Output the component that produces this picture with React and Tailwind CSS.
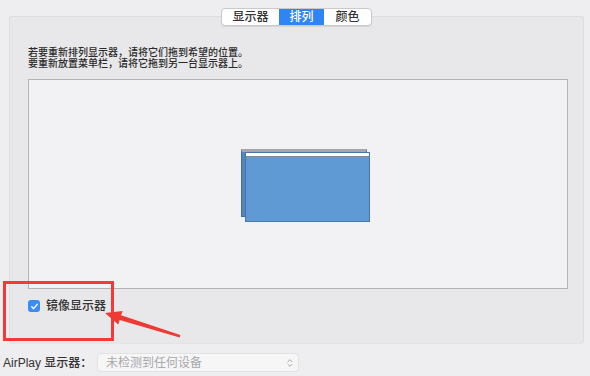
import { ChevronsUpDown } from "lucide-react";

const tabs = [
  { label: "显示器", w: "w-[57px]" },
  { label: "排列", w: "w-[45px]", active: true },
  { label: "颜色", w: "w-[47px]" },
];

// red annotation arrow, points from lower right to the checkbox label
const Arrow = () => (
  <svg className="absolute left-0 top-0" width="590" height="376" viewBox="0 0 590 376">
    <polygon
      points="105,313 122.5,311 121.1,315.3 180.3,335 179.7,337.5 119.7,320.1 118.3,324.4"
      fill="#ee3a32"
    />
  </svg>
);

export default function App() {
  return (
    <div className="relative w-[590px] h-[376px] overflow-hidden bg-[#eeedef] font-['Liberation_Sans','Noto_Sans_CJK_SC',sans-serif] text-[#2e2e2e]">
      {/* group box */}
      <div className="ml-[9px] mr-[6px] mt-[16px] h-[328px] border border-[#dedde0] border-b-[#e4e3e5] rounded-[3px] bg-[#e8e7e9]">
        {/* segmented control */}
        <div className="flex justify-center -mt-[9px]">
          <div className="flex h-[18px] rounded-[4px] border border-[#c9c9cb] bg-white shadow-[0_1px_1px_rgba(0,0,0,0.08)] overflow-hidden">
            {tabs.map((t, i) => (
              <div
                key={t.label}
                className={`${t.w} flex items-center justify-center text-[12px] leading-none font-medium ${
                  t.active ? "bg-[#2f84f6] text-white" : "text-[#333]"
                } ${i > 0 && !t.active && !tabs[i - 1].active ? "border-l border-[#d0d0d0]" : ""}`}
              >
                {t.label}
              </div>
            ))}
          </div>
        </div>

        {/* hint text */}
        <div className="pl-[18px] mt-[21px] text-[10px] leading-[11px] font-medium text-[#2a2a2a]">
          <p>若要重新排列显示器，请将它们拖到希望的位置。</p>
          <p>要重新放置菜单栏，请将它拖到另一台显示器上。</p>
        </div>

        {/* arrangement area */}
        <div className="ml-[18px] mt-[10px] w-[540px] h-[210px] border border-[#b4b4b6] bg-[#f2f1f3] flex items-center justify-center">
          <div className="relative ml-[15px] mt-[3px] w-[129px] h-[73px]">
            <div className="absolute left-0 top-0 w-[126px] h-[68px] bg-[#4f86c0] border border-[#476f9a] border-t-[3px] border-t-[#a7a6aa]" />
            <div className="absolute left-[4px] top-[3px] w-[125px] h-[70px] bg-[#5f9ad5] border border-[#4a76a5]">
              <div className="h-[4px] bg-white border-b border-[#8a8a8e]" />
            </div>
          </div>
        </div>

        {/* mirror checkbox */}
        <div className="flex items-center gap-[6px] ml-[18px] mt-[11px]">
          <div className="w-[12px] h-[12px] rounded-[3px] bg-[#3a8ef3] flex items-center justify-center">
            <svg width="9" height="9" viewBox="0 0 10 10">
              <path d="M2 5.3l2 2.1L8 2.6" fill="none" stroke="white" strokeWidth="1.6" strokeLinecap="round" strokeLinejoin="round" />
            </svg>
          </div>
          <span className="text-[12px] leading-none font-medium text-[#333]">镜像显示器</span>
        </div>
      </div>

      {/* airplay row */}
      <div className="flex items-center mt-[9px] pl-[3px]">
        <span className="text-[12px] leading-none font-medium text-[#333] w-[94px]">AirPlay 显示器：</span>
        <div className="w-[202px] h-[19px] rounded-[4px] border border-[#e2e2e4] bg-[#f6f6f7] flex items-center justify-between pl-[8px] pr-[3px]">
          <span className="text-[12px] leading-none text-[#a8a8aa]">未检测到任何设备</span>
          <ChevronsUpDown size={10} strokeWidth={2} className="text-[#9a9a9c]" />
        </div>
      </div>

      {/* annotation */}
      <div className="absolute left-[3px] top-[281px] w-[111px] h-[60px] border-[3px] border-[#f5393a]" />
      <Arrow />
    </div>
  );
}
